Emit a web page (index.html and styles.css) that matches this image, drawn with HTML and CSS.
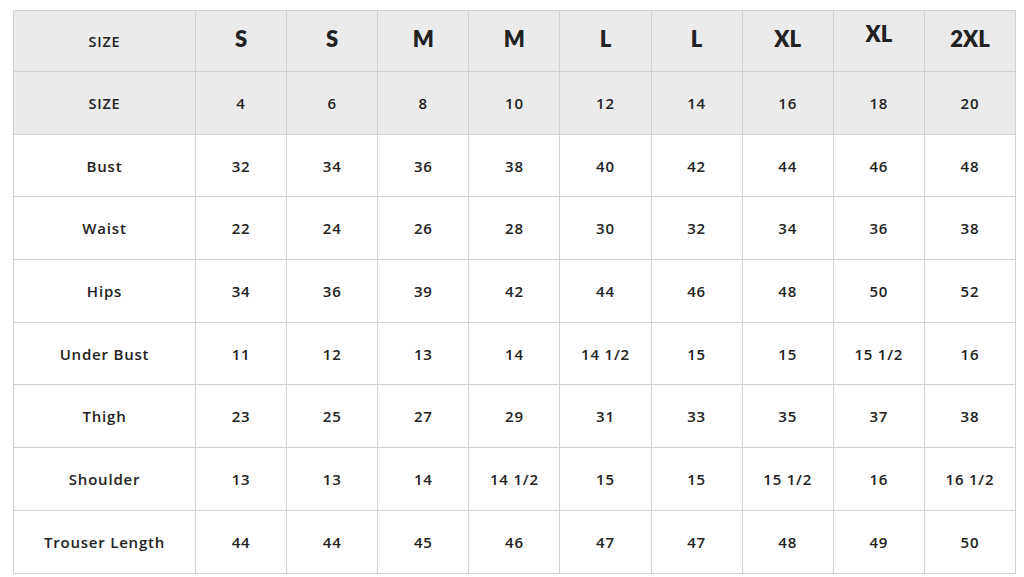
FILE: index.html
```html
<!DOCTYPE html>
<html>
<head>
<meta charset="utf-8">
<link rel="stylesheet" href="styles.css">
</head>
<body>
<div class="page">
<table class="chart">
<colgroup><col class="c-label"><col><col><col><col><col><col><col><col><col></colgroup>
<tr class="head r1"><th class="lbl">SIZE</th><th class="big">S</th><th class="big">S</th><th class="big">M</th><th class="big">M</th><th class="big">L</th><th class="big">L</th><th class="big">XL</th><th class="big up">XL</th><th class="big">2XL</th></tr>
<tr class="head r2"><th class="lbl">SIZE</th><td>4</td><td>6</td><td>8</td><td>10</td><td>12</td><td>14</td><td>16</td><td>18</td><td>20</td></tr>
<tr class="r3"><th>Bust</th><td>32</td><td>34</td><td>36</td><td>38</td><td>40</td><td>42</td><td>44</td><td>46</td><td>48</td></tr>
<tr class="r4"><th>Waist</th><td>22</td><td>24</td><td>26</td><td>28</td><td>30</td><td>32</td><td>34</td><td>36</td><td>38</td></tr>
<tr class="r5"><th>Hips</th><td>34</td><td>36</td><td>39</td><td>42</td><td>44</td><td>46</td><td>48</td><td>50</td><td>52</td></tr>
<tr class="r6"><th>Under Bust</th><td>11</td><td>12</td><td>13</td><td>14</td><td>14 1/2</td><td>15</td><td>15</td><td>15 1/2</td><td>16</td></tr>
<tr class="r7"><th>Thigh</th><td>23</td><td>25</td><td>27</td><td>29</td><td>31</td><td>33</td><td>35</td><td>37</td><td>38</td></tr>
<tr class="r8"><th>Shoulder</th><td>13</td><td>13</td><td>14</td><td>14 1/2</td><td>15</td><td>15</td><td>15 1/2</td><td>16</td><td>16 1/2</td></tr>
<tr class="r9"><th>Trouser Length</th><td>44</td><td>44</td><td>45</td><td>46</td><td>47</td><td>47</td><td>48</td><td>49</td><td>50</td></tr>
</table>
</div>
</body>
</html>
```

FILE: styles.css
```css
html, body {
  margin: 0;
  padding: 0;
  background: #ffffff;
}
.page {
  padding: 10px 9px 4px 13px;
}
.chart {
  border-collapse: collapse;
  table-layout: fixed;
  width: 1003px;
  font-family: "Open Sans", Lato, sans-serif;
  color: #222222;
}
.c-label {
  width: 182px;
}
.chart th,
.chart td {
  border: 1px solid #d2d2d2;
  text-align: center;
  vertical-align: middle;
  padding: 0;
  font-size: 15px;
  font-weight: 600;
  letter-spacing: 0.8px;
}
.chart .head th,
.chart .head td {
  background: #ebebeb;
}
.chart th.lbl {
  font-size: 14.5px;
}
.chart th.big {
  font-family: Lato, "Open Sans", sans-serif;
  font-size: 22px;
  font-weight: 800;
  letter-spacing: 0;
  padding-bottom: 6px;
}
.chart th.big.up {
  padding-bottom: 16px;
}
.r1 { height: 61px; }
.r2 { height: 63px; }
.r3 { height: 62px; }
.r4 { height: 63px; }
.r5 { height: 63px; }
.r6 { height: 62px; }
.r7 { height: 63px; }
.r8 { height: 63px; }
.r9 { height: 63px; }
```
